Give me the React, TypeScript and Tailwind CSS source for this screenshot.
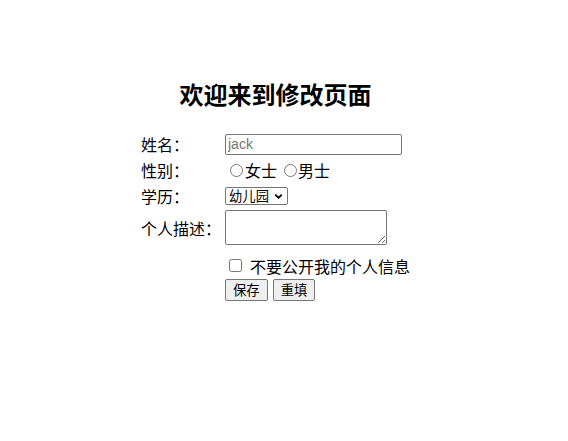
import { ChevronDown } from "lucide-react";

const cjk = "font-['Microsoft_YaHei','Noto_Sans_CJK_SC',sans-serif]";

export default function App() {
  return (
    <div className={`w-[551px] min-h-[441px] bg-white text-black ${cjk}`}>
      <div className="pt-[76px]">
        {/* Title */}
        <h2 className="text-center text-2xl font-bold leading-[36px]">欢迎来到修改页面</h2>

        {/* Form */}
        <form className="w-[269px] mx-auto mt-[22px] flex flex-col text-base whitespace-nowrap">
          <div className="flex items-center h-[21px]">
            <label className="w-[84px] leading-[21px]">姓名：</label>
            <input
              type="text"
              placeholder="jack"
              className="w-[177px] h-[21px] px-[2px] text-[14px] font-['Liberation_Sans',sans-serif] border border-[#767676] rounded-[2px] placeholder:text-[#757575]"
            />
          </div>

          <div className="flex items-center h-[20px] mt-[5px]">
            <label className="w-[84px]">性别：</label>
            <div className="flex items-center">
              <input type="radio" name="sex" className="w-[13px] h-[13px] ml-[5px] mr-[2px]" />
              <span>女士</span>
              <input type="radio" name="sex" className="w-[13px] h-[13px] ml-[7px] mr-[1px]" />
              <span>男士</span>
            </div>
          </div>

          <div className="flex items-center h-[18px] mt-[7px]">
            <label className="w-[84px]">学历：</label>
            <div className="flex items-center w-[63px] h-[18px] pl-[3px] pr-[3px] border border-[#767676] rounded-[2px] text-[13.33px]">
              <select className="appearance-none flex-1 outline-none leading-[16px]">
                <option>幼儿园</option>
                <option>小学</option>
                <option>初中</option>
                <option>高中</option>
                <option>大学</option>
              </select>
              <ChevronDown className="w-[11px] h-[11px]" strokeWidth={4} />
            </div>
          </div>

          <div className="flex items-center h-[35px] mt-[5px]">
            <label className="w-[84px]">个人描述：</label>
            <textarea className="w-[162px] h-[35px] border border-[#767676] rounded-[2px] resize-y" />
          </div>

          <div className="flex items-center h-[19px] mt-[11px] pl-[84px]">
            <input type="checkbox" className="w-[13px] h-[13px] ml-[4px] mr-[8px]" />
            <span>不要公开我的个人信息</span>
          </div>

          <div className="flex items-center mt-[4px] pl-[84px] gap-[5px]">
            <button type="submit" className="h-[22px] px-[7px] text-[13.33px] bg-[#efefef] border border-[#767676] rounded-[2px]">
              保存
            </button>
            <button type="reset" className="h-[22px] px-[7px] text-[13.33px] bg-[#efefef] border border-[#767676] rounded-[2px]">
              重填
            </button>
          </div>
        </form>
      </div>
    </div>
  );
}
